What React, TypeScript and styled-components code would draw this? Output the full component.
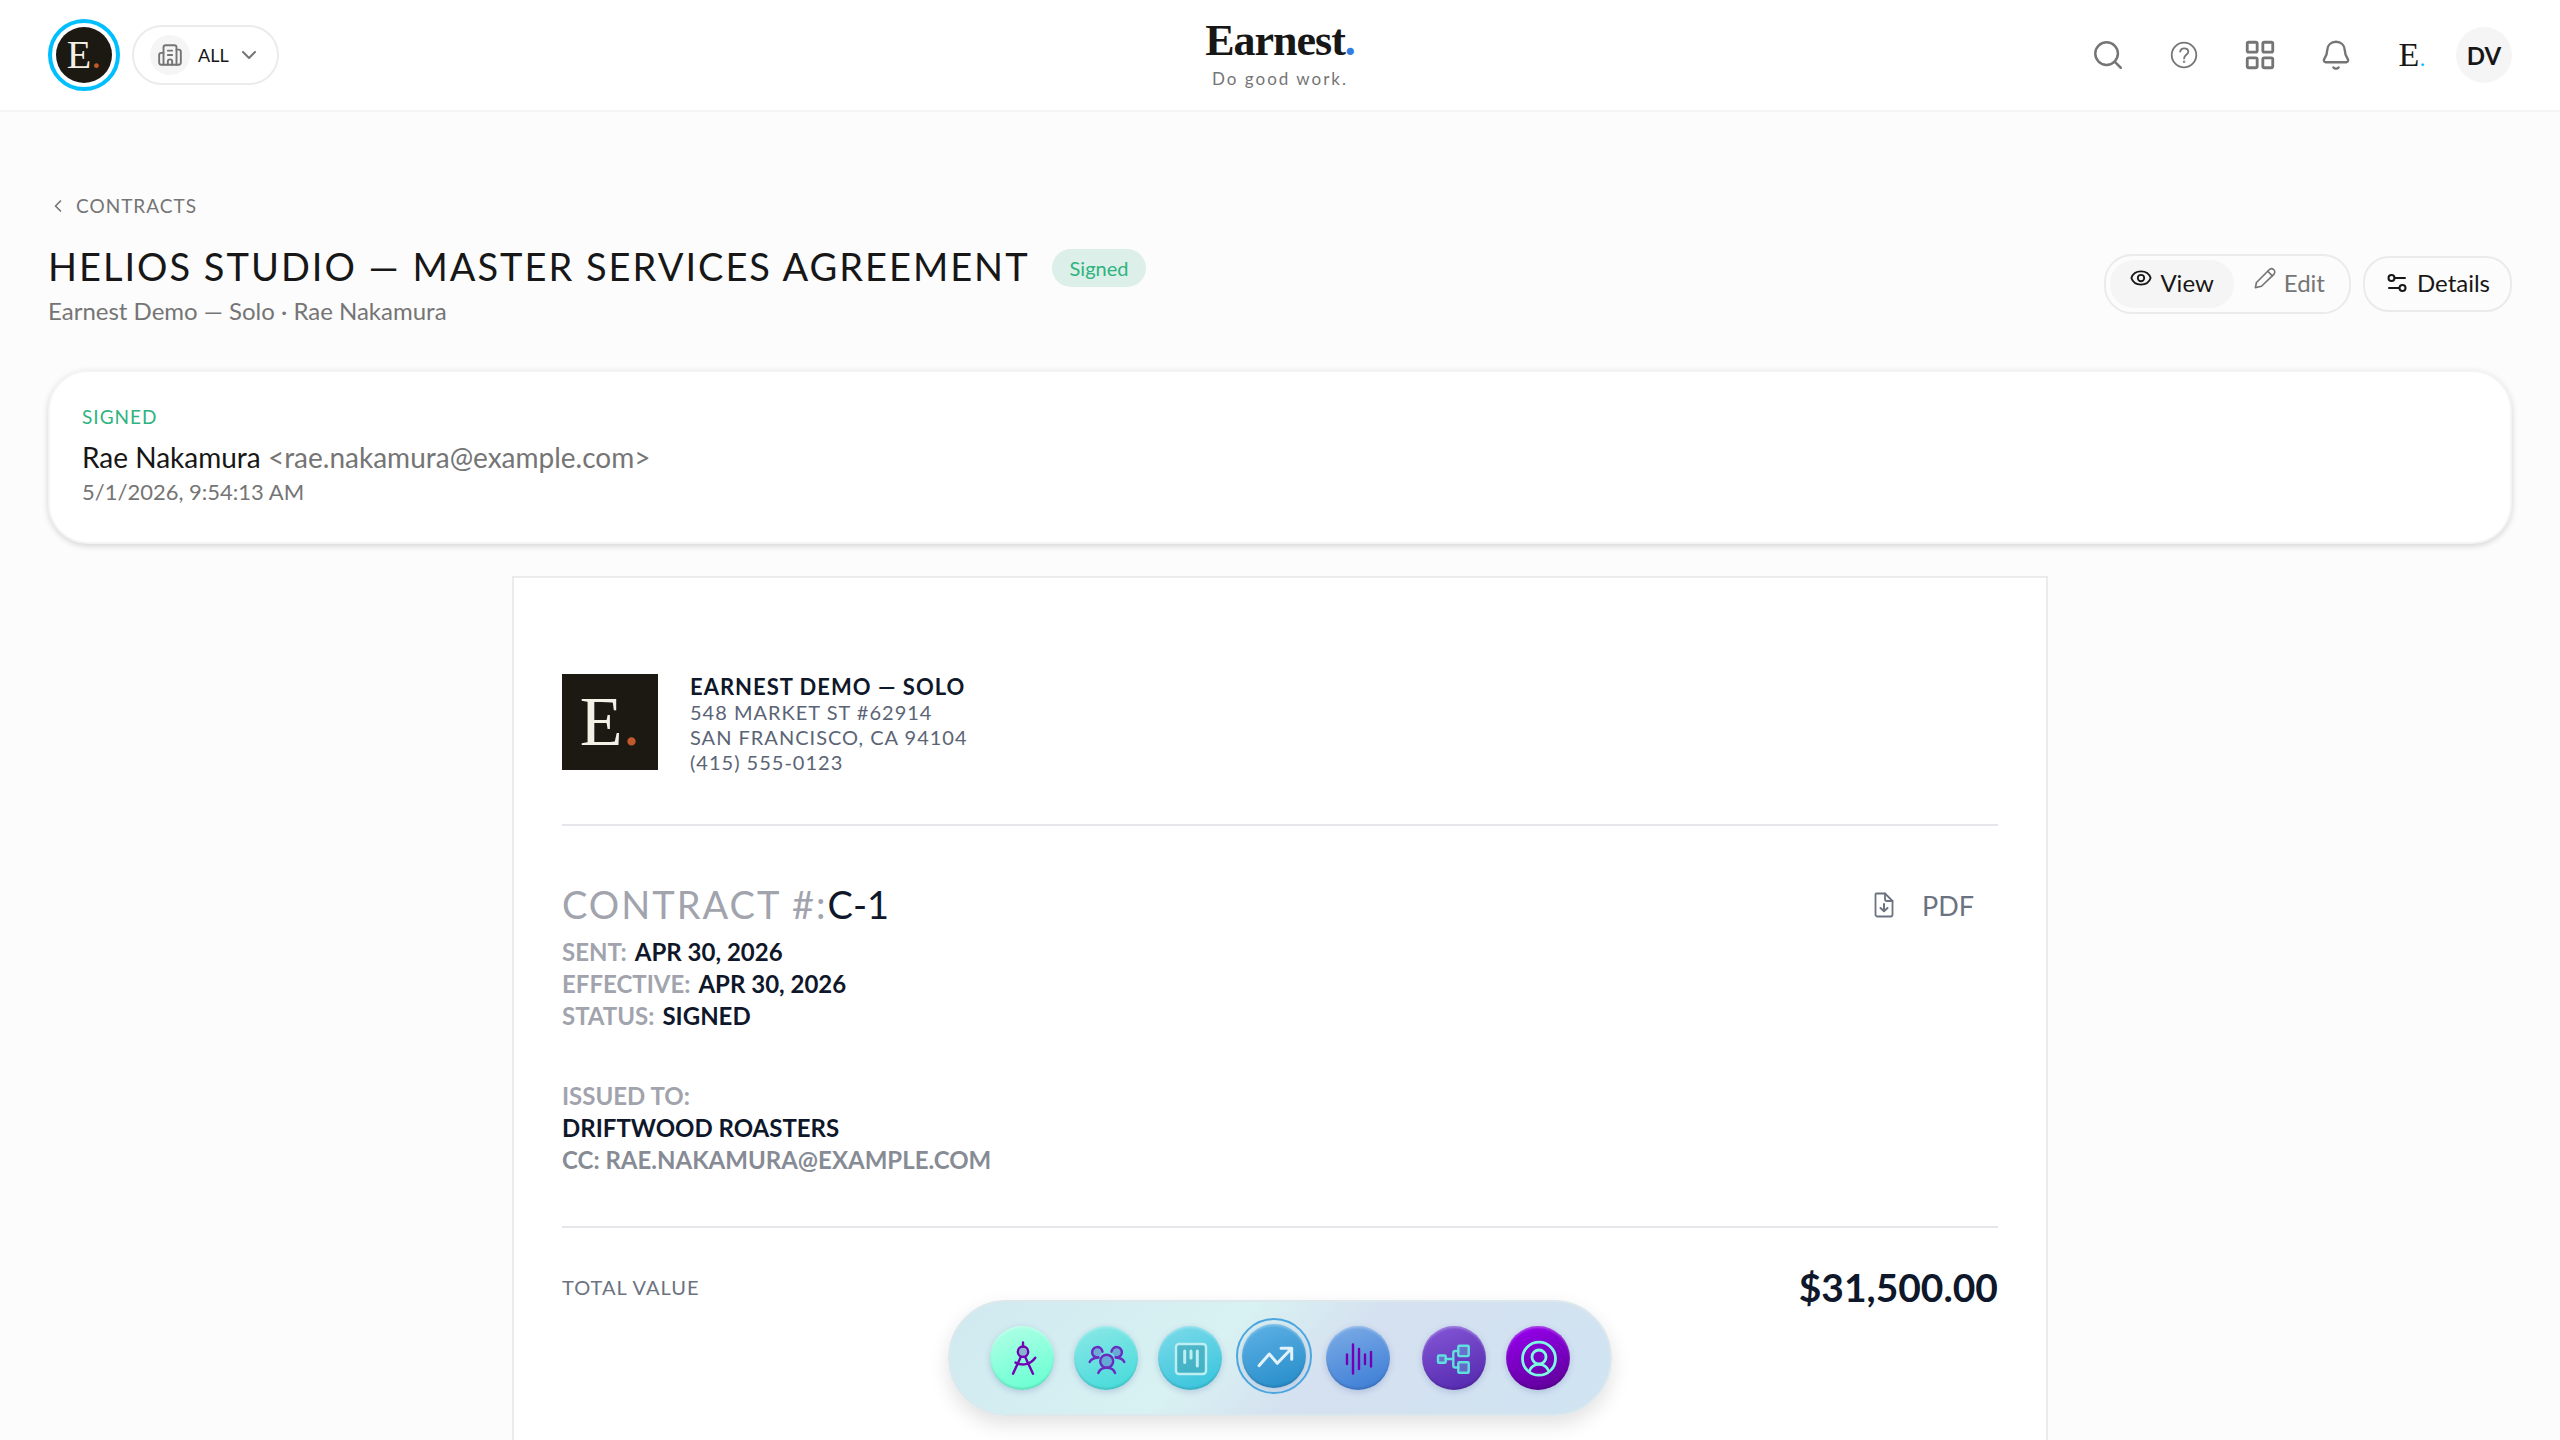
import React from "react";
import styled, { createGlobalStyle, css } from "styled-components";
import { Building2, ChevronDown, ChevronLeft, LayoutGrid, Search } from "lucide-react";

const ink = "#171717";
const navy = "#0f172a";
const muted = "#757575";
const line = "#ebebeb";

const GlobalStyle = createGlobalStyle`
  *, *::before, *::after { box-sizing: border-box; }
  body {
    margin: 0;
    background: #fcfcfc;
    color: ${ink};
    font-family: Lato, "Open Sans", sans-serif;
    font-size: 22px;
    overflow-x: hidden;
  }
  button { font: inherit; color: inherit; cursor: pointer; border: 0; background: none; padding: 0; }
  a { color: inherit; text-decoration: none; }
  h1, h2, p, dl, dt, dd { margin: 0; font-weight: 400; }
  svg { display: block; flex: none; }
`;

const Shell = styled.div`
  min-height: 100vh;
  display: flex;
  flex-direction: column;
`;

const TopBar = styled.header`
  display: grid;
  grid-template-columns: 1fr auto 1fr;
  align-items: center;
  height: 112px;
  padding: 0 48px;
  background: #fff;
  border-bottom: 2px solid #f5f5f5;
`;

const Cluster = styled.div<{ $gap: number; $end?: boolean }>`
  display: flex;
  align-items: center;
  gap: ${(p) => p.$gap}px;
  justify-content: ${(p) => (p.$end ? "flex-end" : "flex-start")};
`;

const LogoRing = styled.button`
  display: flex;
  width: 72px;
  height: 72px;
  padding: 4px;
  border: 4px solid #00bfff;
  border-radius: 50%;
  background: #fff;
`;

const Monogram = styled.span<{ $size: number; $round?: boolean }>`
  display: flex;
  flex: none;
  align-items: center;
  justify-content: center;
  width: ${(p) => p.$size}px;
  height: ${(p) => p.$size}px;
  border-radius: ${(p) => (p.$round ? "50%" : "0")};
  background: #1c1912;
  color: #f5f0e6;
  font-family: "Liberation Serif", serif;
  font-size: ${(p) => (p.$round ? 40 : 70)}px;
  line-height: 1;
  i { font-style: normal; color: #c05a2b; }
`;

const ScopePill = styled.button`
  display: flex;
  align-items: center;
  gap: 8px;
  height: 60px;
  padding: 0 16px;
  border: 2px solid ${line};
  border-radius: 30px;
  background: #fff;
  font-size: 18px;
  svg { color: ${muted}; }
`;

const ScopeIcon = styled.span`
  display: grid;
  place-items: center;
  width: 40px;
  height: 40px;
  border-radius: 50%;
  background: #f5f5f5;
`;

const Brand = styled.a`
  display: flex;
  flex-direction: column;
  align-items: center;
  gap: 4px;
  padding-top: 4px;
`;

const BrandName = styled.span`
  font: 700 44px/40px "Liberation Serif", serif;
  letter-spacing: -1px;
  i { font-style: normal; color: #2f7de1; }
`;

const BrandLine = styled.span`
  font-size: 17px;
  line-height: 28px;
  letter-spacing: 2px;
  color: ${muted};
`;

const IconButton = styled.button`
  display: grid;
  place-items: center;
  width: 48px;
  height: 48px;
  color: ${muted};
`;

const SmallMark = styled.span`
  font: 34px/48px "Liberation Serif", serif;
  color: ${ink};
  i { font-size: 24px; font-style: normal; color: #00bfff; }
`;

const Avatar = styled.button`
  width: 56px;
  height: 56px;
  border-radius: 50%;
  background: #f5f5f5;
  color: ${ink};
  font-size: 24px;
  font-weight: 700;
`;

const Main = styled.main`
  flex: 1;
  display: flex;
  flex-direction: column;
  padding: 80px 48px 0;
`;

const BackLink = styled.a`
  display: flex;
  align-items: center;
  align-self: flex-start;
  gap: 8px;
  font-size: 19px;
  line-height: 28px;
  letter-spacing: 1px;
  color: ${muted};
`;

const PageHead = styled.div`
  display: flex;
  align-items: center;
  justify-content: space-between;
  margin: 22px 0 44px;
`;

const TitleRow = styled.div`
  display: flex;
  align-items: center;
  gap: 22px;
`;

const Title = styled.h1`
  padding-bottom: 2px;
  font-size: 38px;
  line-height: 48px;
  letter-spacing: 2px;
`;

const Badge = styled.span`
  margin-top: 2px;
  padding: 0 18px;
  border-radius: 19px;
  background: #dcefe8;
  color: #2fb380;
  font-size: 20px;
  line-height: 38px;
`;

const Subtitle = styled.p`
  margin-top: 4px;
  font-size: 24px;
  line-height: 30px;
  color: ${muted};
`;

const Segmented = styled.div`
  display: flex;
  padding: 4px;
  border: 2px solid ${line};
  border-radius: 28px;
`;

const pill = css`
  display: flex;
  align-items: center;
  gap: 8px;
  padding: 0 20px 4px;
  font-size: 24px;
`;

const Segment = styled.button<{ $active?: boolean }>`
  ${pill}
  height: 48px;
  border-radius: 24px;
  background: ${(p) => (p.$active ? "#f5f5f5" : "transparent")};
  color: ${(p) => (p.$active ? ink : muted)};
  svg { margin-bottom: 8px; }
`;

const DetailsButton = styled.button`
  ${pill}
  height: 56px;
  border: 2px solid ${line};
  border-radius: 26px;
  svg { margin-top: 2px; }
`;

const SignCard = styled.section`
  padding: 31px 32px 33px;
  border: 2px solid #f4f4f4;
  border-radius: 40px;
  background: #fff;
  box-shadow: 0 2px 6px rgba(0, 0, 0, 0.16);
`;

const SignState = styled.p`
  font-size: 19px;
  line-height: 28px;
  letter-spacing: 1px;
  color: #2fb380;
`;

const Signer = styled.p`
  margin-top: 8px;
  font-size: 28px;
  line-height: 36px;
  span { color: ${muted}; }
`;

const SignTime = styled.p`
  line-height: 34px;
  color: ${muted};
`;

const Sheet = styled.article`
  flex: 1;
  width: 100%;
  max-width: 1536px;
  margin: 32px auto 0;
  padding: 96px 48px;
  border: 2px solid ${line};
  border-bottom: 0;
  background: #fff;
  color: ${navy};
`;

const Letterhead = styled.div`
  display: flex;
  align-items: flex-start;
  gap: 32px;
  padding-bottom: 49px;
  border-bottom: 2px solid #e5e7eb;
`;

const Company = styled.address`
  font-style: normal;
  font-size: 20px;
  line-height: 25px;
  letter-spacing: 1px;
  color: #5b6475;
  strong { color: ${navy}; font-size: 22px; font-weight: 700; line-height: 26px; }
  span, strong { display: block; }
`;

const Summary = styled.div`
  display: flex;
  align-items: flex-start;
  justify-content: space-between;
  padding: 48px 0 50px;
  border-bottom: 2px solid #e5e7eb;
`;

const ContractNo = styled.h2`
  margin-bottom: 2px;
  font-size: 38px;
  line-height: 60px;
  span { color: #a1a3ad; letter-spacing: 2px; }
`;

const Facts = styled.dl`
  margin-bottom: 48px;
  font-size: 24px;
  line-height: 32px;
  div { display: flex; gap: 8px; }
  dt { font-weight: 700; color: #a1a3ad; }
  dd { font-weight: 700; }
`;

const Party = styled.p<{ $tone: string }>`
  font-size: 24px;
  font-weight: 700;
  line-height: 32px;
  color: ${(p) => p.$tone};
`;

const PdfButton = styled.button`
  display: flex;
  align-items: center;
  gap: 24px;
  height: 62px;
  padding: 0 24px;
  font-size: 27px;
  color: #6b7280;
`;

const TotalRow = styled.div`
  display: flex;
  align-items: center;
  justify-content: space-between;
  padding-top: 32px;
`;

const TotalLabel = styled.span`
  font-size: 20px;
  letter-spacing: 1px;
  color: #6b7280;
`;

const TotalValue = styled.strong`
  font-size: 39px;
  font-weight: 700;
  line-height: 54px;
`;

const Dock = styled.nav`
  position: fixed;
  bottom: 24px;
  left: 50%;
  transform: translateX(-50%);
  display: flex;
  gap: 20px;
  padding: 24px 40px;
  border: 2px solid #dde8ec;
  border-radius: 58px;
  background: linear-gradient(135deg, #d0e9f0 0%, #d8f1f2 40%, #d5e0f0 58%, #cfe4f2 100%);
  box-shadow: 0 8px 20px rgba(0, 0, 0, 0.12);
`;

const DockButton = styled.button<{ $from: string; $to: string; $tone: string; $active?: boolean; $apart?: boolean }>`
  display: grid;
  place-items: center;
  width: 64px;
  height: 64px;
  margin-left: ${(p) => (p.$apart ? 12 : 0)}px;
  border-radius: 50%;
  background: linear-gradient(160deg, ${(p) => p.$from}, ${(p) => p.$to});
  color: ${(p) => p.$tone};
  box-shadow: inset 0 2px 2px rgba(255, 255, 255, 0.25), inset 0 -2px 2px rgba(0, 0, 0, 0.12),
    0 2px 6px rgba(40, 60, 140, 0.2);
  ${(p) =>
    p.$active &&
    css`
      transform: translateY(-2px);
      outline: 2px solid #4ba6e0;
      outline-offset: 4px;
    `}
`;

type ArtProps = { children: React.ReactNode; size?: number; box?: number; stroke?: number };

const Art = ({ children, size = 40, box = 40, stroke = 2.4 }: ArtProps) => (
  <svg width={size} height={size} viewBox={`0 0 ${box} ${box}`} fill="none" stroke="currentColor"
    strokeWidth={stroke} strokeLinecap="round" strokeLinejoin="round" aria-hidden="true">
    {children}
  </svg>
);

const tint = { fill: "currentColor", fillOpacity: 0.3 };

const apps = [
  {
    name: "Design", from: "#b4ffe6", to: "#62ffd0", tone: "#7300b5",
    art: (
      <>
        <circle cx="21" cy="13.7" r="5.2" {...tint} />
        <path d="M21 4.5v4M18.8 19 11 35.7M23.2 19 31 35.7M13.5 24.6c6.5 3.4 14.5 2.4 19.8-4.9" />
      </>
    ),
  },
  {
    name: "People", from: "#8ce8e6", to: "#42dada", tone: "#6a2cc0",
    art: (
      <>
        <circle cx="20.7" cy="23.3" r="6.5" {...tint} />
        <path d="M12.3 35c1.4-3.6 4.6-5.2 8.4-5.2s7 1.6 8.4 5.2" />
        <path d="M12.5 19.3a5.2 5.2 0 1 1 4-5.6M29.5 19.3a5.2 5.2 0 1 0-4-5.6" {...tint} />
        <path d="M3.7 24c1.4-2.9 4-4.3 8-4.3M38.3 24c-1.4-2.9-4-4.3-8-4.3" />
      </>
    ),
  },
  {
    name: "Boards", from: "#7ddbe9", to: "#34c3dc", tone: "#bdeef2",
    art: (
      <>
        <rect x="6" y="6" width="30" height="30" rx="3" fill="#3d9fb0" fillOpacity="0.55" />
        <path strokeWidth="3" d="M14.7 13v11.5M21 13v7M27.3 13v15" />
      </>
    ),
  },
  {
    name: "Sales", from: "#5fb2e6", to: "#248bc8", tone: "#e2f2fb", active: true,
    art: <path strokeWidth="3" d="m5 29.7 10.3-11.7 8 9.3 14.4-15M27 12.3h10.7v11" />,
  },
  {
    name: "Audio", from: "#7dade6", to: "#3a7bd5", tone: "#7300b5",
    art: <path d="M9 16.5v9.5M15 6.5v29M21 11v20M27 16.5v9.5M33 14v14.5" />,
  },
  {
    name: "Workflows", from: "#8558d8", to: "#5226ab", tone: "#5fe0de", apart: true,
    art: (
      <>
        <rect x="4" y="17.5" width="7.7" height="7.3" rx="1" {...tint} />
        <rect x="24.3" y="7.7" width="10.4" height="10.4" rx="1" {...tint} />
        <rect x="24.3" y="24.3" width="10.4" height="10.4" rx="1" {...tint} />
        <path d="M11.7 21h7.6M24.3 13h-3a2 2 0 0 0-2 2v12.5a2 2 0 0 0 2 2h3" />
      </>
    ),
  },
  {
    name: "Account", from: "#9a00f2", to: "#5a0092", tone: "#7dfbe0",
    art: (
      <g strokeWidth="2.8">
        <circle cx="21" cy="20.7" r="16.5" />
        <circle cx="21" cy="19" r="7" />
        <path d="M11.3 33c1.6-4.2 5.2-6.7 9.7-6.7s8.1 2.5 9.7 6.7" />
      </g>
    ),
  },
];

const facts = [
  ["SENT:", "APR 30, 2026"],
  ["EFFECTIVE:", "APR 30, 2026"],
  ["STATUS:", "SIGNED"],
];

export default function App() {
  return (
    <Shell>
      <GlobalStyle />
      <TopBar>
        <Cluster $gap={12}>
          <LogoRing aria-label="Workspace">
            <Monogram $size={56} $round>E<i>.</i></Monogram>
          </LogoRing>
          <ScopePill>
            <ScopeIcon><Building2 size={26} strokeWidth={1.75} /></ScopeIcon>
            ALL
            <ChevronDown size={24} />
          </ScopePill>
        </Cluster>
        <Brand href="#">
          <BrandName>Earnest<i>.</i></BrandName>
          <BrandLine>Do good work.</BrandLine>
        </Brand>
        <Cluster $gap={20} $end>
          <Cluster $gap={28}>
            <IconButton aria-label="Search"><Search size={34} strokeWidth={1.75} /></IconButton>
            <IconButton aria-label="Help">
              <Art size={32} box={32} stroke={1.8}>
                <circle cx="16" cy="16" r="12.3" />
                <path d="M12.2 12.6c.3-2 1.9-3.2 4-3.2 2.3 0 4.1 1.3 4.1 3.4 0 3.2-4.2 2.9-4.2 6.6" />
                <circle cx="16.1" cy="22.7" r="0.4" />
              </Art>
            </IconButton>
            <IconButton aria-label="Apps"><LayoutGrid size={34} strokeWidth={2} /></IconButton>
            <IconButton aria-label="Notifications">
              <Art size={32} box={32}>
                <path d="M16 2.8c-5 0-8.4 3.4-8.7 8-.2 4.4-1 6.3-2.9 8.9-.9 1.3-.6 3.5 1.2 3.5h20.8c1.8 0 2.1-2.2 1.2-3.5-1.9-2.6-2.7-4.5-2.9-8.9-.3-4.6-3.7-8-8.7-8z" />
                <path d="M13.4 28.4a3.4 3.4 0 0 0 5.2 0" />
              </Art>
            </IconButton>
            <IconButton aria-label="Earnest"><SmallMark>E<i>.</i></SmallMark></IconButton>
          </Cluster>
          <Avatar>DV</Avatar>
        </Cluster>
      </TopBar>

      <Main>
        <BackLink href="#"><ChevronLeft size={20} />CONTRACTS</BackLink>
        <PageHead>
          <div>
            <TitleRow>
              <Title>HELIOS STUDIO — MASTER SERVICES AGREEMENT</Title>
              <Badge>Signed</Badge>
            </TitleRow>
            <Subtitle>Earnest Demo — Solo · Rae Nakamura</Subtitle>
          </div>
          <Cluster $gap={12}>
            <Segmented>
              <Segment $active>
                <Art size={22} box={24} stroke={2}>
                  <path d="M1.5 12C3 7.5 7 4.8 12 4.8S21 7.5 22.5 12C21 16.5 17 19.2 12 19.2S3 16.5 1.5 12z" />
                  <circle cx="12" cy="12" r="3.5" />
                </Art>
                View
              </Segment>
              <Segment>
                <Art size={22} box={24} stroke={1.8}>
                  <path d="M1.5 22.5l1.2-5.6L16.6 3a3.5 3.5 0 0 1 5 5L8.200 21z" />
                  <path d="M15 4.6l5 5" />
                </Art>
                Edit
              </Segment>
            </Segmented>
            <DetailsButton>
              <Art size={24} box={24} stroke={2}>
                <circle cx="6.5" cy="7" r="3" />
                <path d="M9.5 7H20M4 17h10" />
                <circle cx="17.5" cy="17" r="3" />
              </Art>
              Details
            </DetailsButton>
          </Cluster>
        </PageHead>

        <SignCard>
          <SignState>SIGNED</SignState>
          <Signer>Rae Nakamura <span>&lt;rae.nakamura@example.com&gt;</span></Signer>
          <SignTime>5/1/2026, 9:54:13 AM</SignTime>
        </SignCard>

        <Sheet>
          <Letterhead>
            <Monogram $size={96}>E<i>.</i></Monogram>
            <Company>
              <strong>EARNEST DEMO — SOLO</strong>
              <span>548 MARKET ST #62914</span>
              <span>SAN FRANCISCO, CA 94104</span>
              <span>(415) 555-0123</span>
            </Company>
          </Letterhead>
          <Summary>
            <div>
              <ContractNo><span>CONTRACT #:</span>C-1</ContractNo>
              <Facts>
                {facts.map(([term, value]) => (
                  <div key={term}><dt>{term}</dt><dd>{value}</dd></div>
                ))}
              </Facts>
              <Party $tone="#a1a3ad">ISSUED TO:</Party>
              <Party $tone={navy}>DRIFTWOOD ROASTERS</Party>
              <Party $tone="#878b95">CC: RAE.NAKAMURA@EXAMPLE.COM</Party>
            </div>
            <PdfButton>
              <Art size={28} box={28} stroke={1.8}>
                <path d="M6.5 2.5h8.5l7.5 7.5v13.5a2 2 0 0 1-2 2h-13a2 2 0 0 1-2-2v-20a1 1 0 0 1 1-1z" />
                <path d="M15 2.5v5.5a2 2 0 0 0 2 2h5.5" />
                <path strokeWidth="2" d="M14 13v7M10.5 17l3.5 3.3 3.5-3.3" />
              </Art>
              PDF
            </PdfButton>
          </Summary>
          <TotalRow>
            <TotalLabel>TOTAL VALUE</TotalLabel>
            <TotalValue>$31,500.00</TotalValue>
          </TotalRow>
        </Sheet>
      </Main>

      <Dock aria-label="Apps">
        {apps.map((a) => (
          <DockButton key={a.name} aria-label={a.name} $from={a.from} $to={a.to} $tone={a.tone}
            $active={a.active} $apart={a.apart}>
            <Art>{a.art}</Art>
          </DockButton>
        ))}
      </Dock>
    </Shell>
  );
}
